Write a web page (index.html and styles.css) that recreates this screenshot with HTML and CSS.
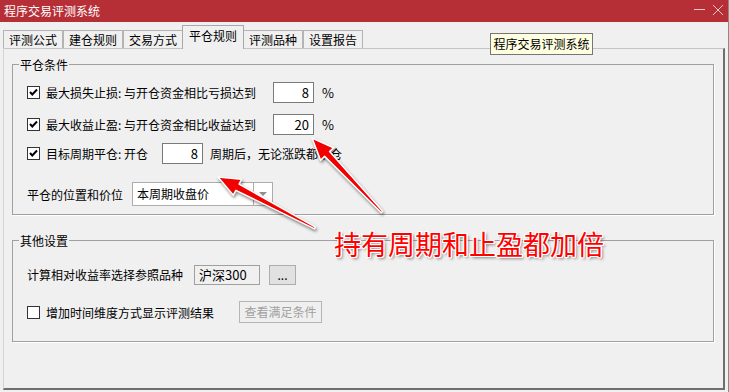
FILE: index.html
```html
<!DOCTYPE html>
<html lang="zh-CN">
<head>
    <meta charset="UTF-8">
    <meta name="viewport" content="width=device-width, initial-scale=1.0">
    <title>程序交易评测系统</title>
    <link rel="stylesheet" href="styles.css">
</head>
<body>
    <div class="window">
        <div class="titlebar">
            <span class="title">程序交易评测系统</span>
            <div class="controls">
                <svg width="12" height="12" viewBox="0 0 12 12"><line x1="1" y1="5.5" x2="12" y2="5.5" stroke="#f3c6c9" stroke-width="1"/></svg>
                <svg width="12" height="12" viewBox="0 0 12 12"><path d="M1 1 L11 11 M11 1 L1 11" stroke="#f3c6c9" stroke-width="1" fill="none"/></svg>
            </div>
        </div>

        <div class="tabs">
            <div class="tab">评测公式</div>
            <div class="tab">建仓规则</div>
            <div class="tab">交易方式</div>
            <div class="tab active">平仓规则</div>
            <div class="tab">评测品种</div>
            <div class="tab">设置报告</div>
        </div>

        <div class="panel">
            <fieldset class="group g1">
                <legend>平仓条件</legend>
                <div class="group-body">
                    <div class="row r1">
                        <span class="chk"><svg width="11" height="11" viewBox="0 0 11 11"><path d="M2 5 L4.3 7.5 L9 2.5" stroke="#000" stroke-width="2" fill="none"/></svg></span>
                        <span class="cond-label">最大损失止损: 与开仓资金相比亏损达到</span>
                        <span class="num">8</span>
                        <span class="unit">%</span>
                    </div>
                    <div class="row r2">
                        <span class="chk"><svg width="11" height="11" viewBox="0 0 11 11"><path d="M2 5 L4.3 7.5 L9 2.5" stroke="#000" stroke-width="2" fill="none"/></svg></span>
                        <span class="cond-label">最大收益止盈: 与开仓资金相比收益达到</span>
                        <span class="num">20</span>
                        <span class="unit">%</span>
                    </div>
                    <div class="row r3">
                        <span class="chk"><svg width="11" height="11" viewBox="0 0 11 11"><path d="M2 5 L4.3 7.5 L9 2.5" stroke="#000" stroke-width="2" fill="none"/></svg></span>
                        <span class="period-label">目标周期平仓: 开仓</span>
                        <span class="num">8</span>
                        <span class="after">周期后，无论涨跌都平仓</span>
                    </div>
                    <div class="row r4">
                        <span class="pos-label">平仓的位置和价位</span>
                        <div class="combo">
                            <span class="combo-text">本周期收盘价</span>
                            <span class="combo-btn"><span class="caret"></span></span>
                        </div>
                    </div>
                </div>
            </fieldset>

            <fieldset class="group g2">
                <legend>其他设置</legend>
                <div class="group-body">
                    <div class="row r5">
                        <span class="ref-label">计算相对收益率选择参照品种</span>
                        <span class="ref-box">沪深300</span>
                        <span class="dots-btn">...</span>
                    </div>
                    <div class="row r6">
                        <span class="chk"></span>
                        <span class="time-label">增加时间维度方式显示评测结果</span>
                        <span class="btn-disabled">查看满足条件</span>
                    </div>
                </div>
            </fieldset>
        </div>

        <div class="tooltip">程序交易评测系统</div>

        <svg class="arrows" width="729" height="392" viewBox="0 0 729 392">
            <polygon points="382.7,211.3 329.6,151.6 333.6,147.8 312,138 320.6,160.2 324.6,156.4 381.3,212.7" />
            <polygon points="315.5,227.1 239.1,184.1 241.7,179.2 218,177 233.3,195.2 235.9,190.3 314.5,228.9" />
        </svg>

        <div class="note">持有周期和止盈都加倍</div>
    </div>
</body>
</html>
```

FILE: styles.css
```css
body {
    margin: 0;
    background: #f0f0f0;
    font-family: "Noto Sans CJK SC", "Microsoft YaHei", sans-serif;
    font-size: 12px;
    color: #000;
    overflow: hidden;
}

.window {
    position: relative;
    width: 729px;
    height: 392px;
    box-sizing: border-box;
    border-right: 1px solid #8a8a8a;
}

.titlebar {
    height: 22px;
    background: #b62f37;
    display: flex;
    justify-content: space-between;
    align-items: flex-start;
}

.title {
    color: #fff;
    line-height: 21px;
    padding-left: 4px;
}

.controls {
    display: flex;
    gap: 7px;
    padding-top: 4px;
    margin-right: 4px;
}

.tabs {
    height: 26px;
    display: flex;
    align-items: flex-end;
    padding-left: 3px;
}

.tab {
    width: 60px;
    height: 18px;
    box-sizing: border-box;
    border: 1px solid #b4b4b4;
    border-bottom: none;
    text-align: center;
    line-height: 17px;
    background: #f0f0f0;
}

.tab.active {
    position: relative;
    z-index: 1;
    width: 62px;
    height: 24px;
    margin: 0 -1px -1px;
    line-height: 19px;
    border-color: #a8a8a8;
}

.panel {
    margin-left: 3px;
    width: 722px;
    height: 342px;
    box-sizing: border-box;
    border-top: 1px solid #c4c4c4;
    border-left: 1px solid #d4d4d4;
    border-right: 2px solid #6f6f6f;
    border-bottom: 2px solid #6f6f6f;
    padding: 7px 9px 0 8px;
}

.group {
    margin: 0;
    padding: 0;
    min-width: 0;
    border: 1px solid #a0a0a0;
    box-shadow: 1px 1px 0 #fff;
}

.group legend {
    margin-left: 6px;
    padding: 0 1px;
    line-height: 17px;
}

.g2 {
    margin-top: 17px;
}

.g1 .group-body {
    padding: 9px 8px 8px 14px;
}

.g2 .group-body {
    padding: 15px 8px 18px 14px;
}

.row {
    display: flex;
    align-items: center;
    height: 21px;
}

.r2 {
    margin-top: 11px;
}

.r3 {
    margin-top: 8px;
}

.r4 {
    margin-top: 18px;
    height: 24px;
}

.r6 {
    margin-top: 16px;
    height: 22px;
}

.chk {
    width: 13px;
    height: 13px;
    box-sizing: border-box;
    border: 1px solid #333;
    background: #fff;
    margin-right: 6px;
    flex: none;
}

.chk svg {
    display: block;
}

.cond-label {
    width: 227px;
    flex: none;
}

.period-label {
    width: 116px;
    flex: none;
}

.num {
    width: 41px;
    height: 21px;
    box-sizing: border-box;
    border: 1px solid #7a7a7a;
    background: #fff;
    text-align: right;
    padding-right: 4px;
    line-height: 19px;
    font-size: 13px;
}

.unit {
    margin-left: 8px;
    font-size: 13px;
}

.after {
    margin-left: 7px;
}

.pos-label {
    width: 105px;
    flex: none;
}

.combo {
    width: 141px;
    height: 24px;
    box-sizing: border-box;
    border: 1px solid #acacac;
    background: #fff;
    display: flex;
}

.combo-text {
    flex: 1;
    padding-left: 4px;
    line-height: 22px;
}

.combo-btn {
    width: 18px;
    border-left: 1px solid #acacac;
    display: flex;
    align-items: center;
    justify-content: center;
}

.caret {
    width: 0;
    height: 0;
    border-left: 4px solid transparent;
    border-right: 4px solid transparent;
    border-top: 4px solid #8f8f8f;
}

.ref-label {
    width: 167px;
    flex: none;
}

.ref-box {
    width: 66px;
    height: 20px;
    box-sizing: border-box;
    border: 1px solid #a0a0a0;
    padding-left: 4px;
    line-height: 18px;
    font-size: 13px;
}

.dots-btn {
    margin-left: 9px;
    width: 27px;
    height: 20px;
    box-sizing: border-box;
    border: 1px solid #adadad;
    background: #e1e1e1;
    text-align: center;
    line-height: 18px;
}

.time-label {
    width: 193px;
    flex: none;
}

.btn-disabled {
    width: 83px;
    height: 22px;
    box-sizing: border-box;
    border: 1px solid #b5b5b5;
    background: #efefef;
    color: #a0a0a0;
    text-align: center;
    line-height: 20px;
}

.tooltip {
    position: absolute;
    left: 490px;
    top: 33px;
    width: 103px;
    height: 22px;
    box-sizing: border-box;
    border: 1px solid #767676;
    background: #ffffe1;
    text-align: center;
    line-height: 20px;
}

.arrows {
    position: absolute;
    left: 0;
    top: 0;
    pointer-events: none;
    filter: drop-shadow(1px 2px 1.5px rgba(0, 0, 0, 0.45));
}

.arrows polygon {
    fill: #f20000;
    stroke: #fff;
    stroke-width: 1.5;
    stroke-linejoin: round;
}

.note {
    position: absolute;
    left: 334px;
    top: 227px;
    font-size: 27px;
    line-height: 34px;
    color: #ff0000;
    text-shadow: 1px 0 #fff, -1px 0 #fff, 0 1px #fff, 0 -1px #fff,
        1px 1px #fff, -1px -1px #fff, 1px -1px #fff, -1px 1px #fff,
        2px 2px 3px rgba(0, 0, 0, 0.5);
}
```
